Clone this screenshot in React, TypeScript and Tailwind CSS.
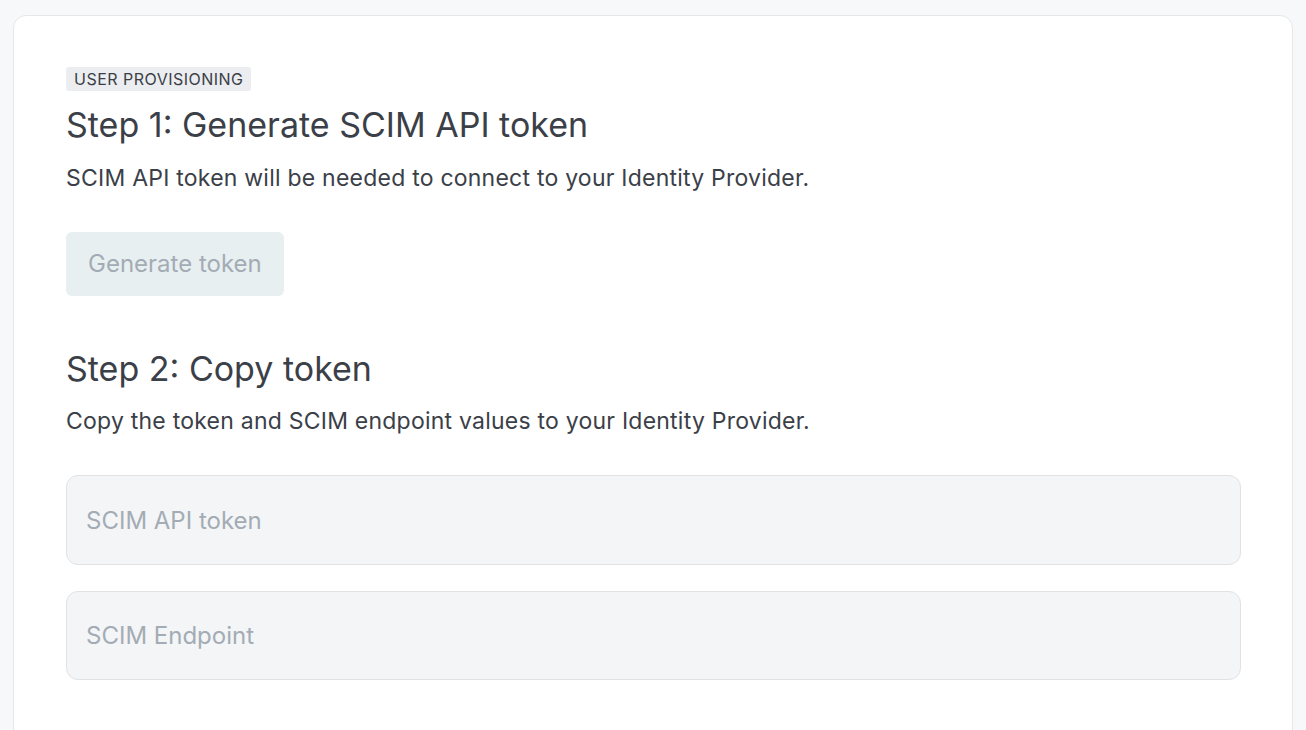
export default function App() {
  return (
    <div
      className="min-h-[730px] bg-[#f7f8fa] px-[13px] pt-[15px]"
      style={{ fontFamily: 'Inter, "Noto Sans", sans-serif' }}
    >
      <div className="h-[740px] rounded-t-[13px] border border-[#e5e7ea] bg-white pl-[52px] pr-[51px] pt-[51px]">
        <span className="inline-block rounded-[3px] bg-[#ecedf0] px-2 text-[16px] leading-6 tracking-[0.03em] text-[#3a3f46]">
          USER PROVISIONING
        </span>
        <h2 className="mt-[14px] text-[34px] leading-10 text-[#3b4048]">
          Step 1: Generate SCIM API token
        </h2>
        <p className="mt-[17px] text-[23px] leading-8 tracking-[0.01em] text-[#3b4048]">
          SCIM API token will be needed to connect to your Identity Provider.
        </p>
        <button
          disabled
          className="mt-[38px] h-16 rounded-md bg-[#e8eff1] px-[22px] text-[24px] text-[#a3acb4]"
        >
          Generate token
        </button>
        <h2 className="mt-[53px] text-[34px] leading-10 text-[#3b4048]">
          Step 2: Copy token
        </h2>
        <p className="mt-4 text-[23px] leading-8 tracking-[0.01em] text-[#3b4048]">
          Copy the token and SCIM endpoint values to your Identity Provider.
        </p>
        <div className="mt-[38px] flex flex-col gap-[26px]">
          <input
            readOnly
            placeholder="SCIM API token"
            className="h-[90px] w-full rounded-xl border border-[#e0e2e6] bg-[#f4f5f7] px-[19px] text-[24px] outline-none placeholder:text-[#a3acb4]"
          />
          <input
            readOnly
            placeholder="SCIM Endpoint"
            className="h-[89px] w-full rounded-xl border border-[#e0e2e6] bg-[#f4f5f7] px-[19px] text-[24px] outline-none placeholder:text-[#a3acb4]"
          />
        </div>
      </div>
    </div>
  )
}
